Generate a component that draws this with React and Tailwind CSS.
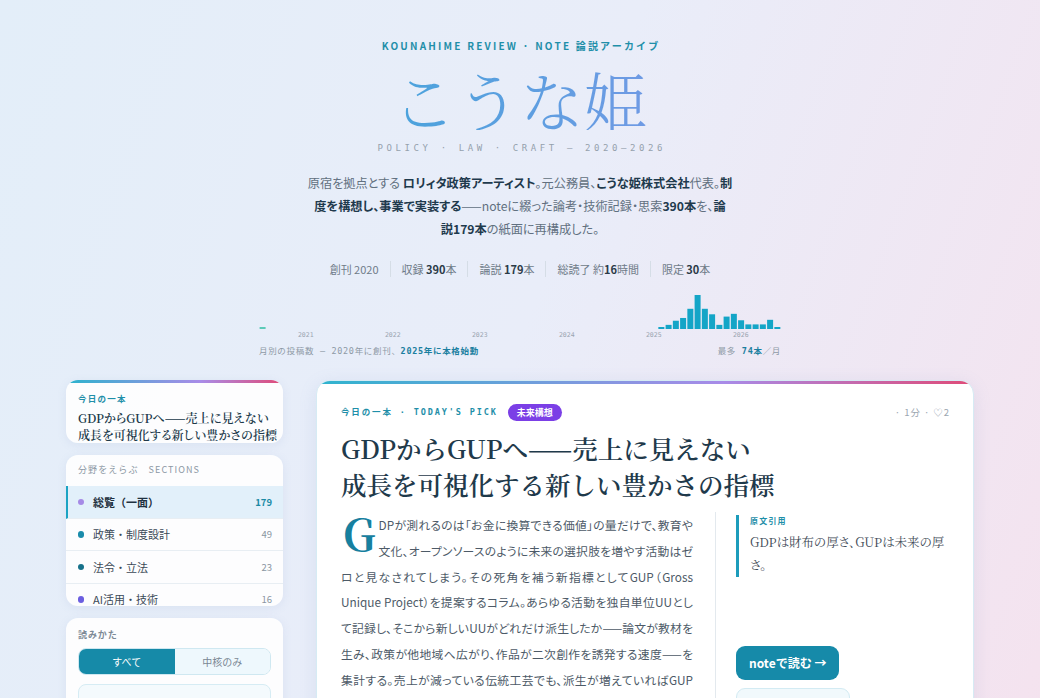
import React from 'react'

const sans = "font-['Noto_Sans_CJK_JP','Noto_Sans',sans-serif]"
const serif = "font-['Noto_Serif_CJK_JP','Liberation_Serif','Noto_Sans_CJK_JP',serif]"
const mono = "font-['DejaVu_Sans_Mono','Noto_Sans_CJK_JP',monospace]"

/* ── monthly post counts, Jun 2020 → May 2026 ── */
const counts = Array(72).fill(0)
counts[0] = 1
;[4, 9, 18, 24, 44, 74, 44, 32, 9, 27, 33, 19, 10, 10, 10, 20, 4].forEach((v, i) => {
  counts[55 + i] = v
})
const years = [
  ['2021', 7],
  ['2022', 19],
  ['2023', 31],
  ['2024', 43],
  ['2025', 55],
  ['2026', 67],
]
const SLOT = 522 / 72

function PostChart() {
  return (
    <div className="mt-[13px] w-[522px]">
      <svg width="522" height="50" className="block">
        {counts.map((v, i) => {
          if (!v) return null
          const h = Math.max((v / 74) * 34, 2)
          return (
            <rect
              key={i}
              x={i * SLOT + 0.6}
              y={39 - h}
              width={6}
              height={h}
              fill={i === 0 ? '#5ccab8' : '#14a5c7'}
            />
          )
        })}
        {years.map(([y, idx]) => (
          <text
            key={y}
            x={idx * SLOT - 4}
            y={46.5}
            textAnchor="middle"
            fontSize="6.5"
            fill="#9aa5b1"
            fontFamily="DejaVu Sans Mono, monospace"
          >
            {y}
          </text>
        ))}
      </svg>
      <div className={`mt-[6px] flex justify-between text-[8.5px] leading-[11px] tracking-[0.08em] text-[#8e9aa6] ${mono}`}>
        <span>
          月別の投稿数 — 2020年に創刊、<b className="text-[#1b7fa0]">2025年に本格始動</b>
        </span>
        <span>
          最多 <b className="text-[#1b7fa0]">74本</b>／月
        </span>
      </div>
    </div>
  )
}

function Stat({ children, first }) {
  return <span className={`px-[11px] ${first ? '' : 'border-l border-[#d5dde6]'}`}>{children}</span>
}

const B = ({ children }) => <b className="font-bold text-[#2b3a47]">{children}</b>
const D = ({ children }) => <b className="font-bold text-[#1f3a4d]">{children}</b>

const sections = [
  { name: '総覧（一面）', count: 179, dot: 'bg-[#a58ae6]', active: true },
  { name: '政策・制度設計', count: 49, dot: 'bg-[#1a8cab]' },
  { name: '法令・立法', count: 23, dot: 'bg-[#16718a]' },
  { name: 'AI活用・技術', count: 16, dot: 'bg-[#6b5ee0]' },
]

function Sidebar() {
  return (
    <aside className="flex w-[217px] flex-col gap-3">
      {/* today's pick, compact */}
      <div className="h-[63px] overflow-hidden rounded-[12px] bg-white/90 shadow-[0_2px_10px_rgba(120,150,190,0.12)]">
        <div className="h-[3px] bg-[linear-gradient(90deg,#2bb3cd,#a98ce8_62%,#e04a77)]" />
        <div className="pl-3 pr-[6px] pt-[9px]">
          <p className="text-[8.5px] font-bold leading-[12px] tracking-[0.15em] text-[#1f8fa9]">今日の一本</p>
          <p
            className={`mt-[5px] text-[12px] font-semibold leading-[17px] text-[#20394a] [font-feature-settings:'palt'] ${serif}`}
          >
            GDPからGUPへ——売上に見えない成長を可視化する新しい豊かさの指標
          </p>
        </div>
      </div>

      {/* sections */}
      <div className="h-[151px] overflow-hidden rounded-[12px] bg-white/90 shadow-[0_2px_10px_rgba(120,150,190,0.12)]">
        <p className="px-3 pb-[10px] pt-[9px] text-[9px] leading-[12px] tracking-[0.12em] text-[#8c98a4]">
          分野をえらぶ　SECTIONS
        </p>
        {sections.map((s) => (
          <div
            key={s.name}
            className={`flex h-[32.5px] items-center border-b border-[#e8eef3] pr-[11px] ${
              s.active ? 'border-l-2 border-l-[#1ba3c3] bg-[#e2f0fa] pl-[9.5px]' : 'pl-[11.5px]'
            }`}
          >
            <span className={`h-[6.5px] w-[6.5px] rounded-full ${s.dot}`} />
            <span
              className={`ml-[9px] flex-1 text-[11px] ${
                s.active ? 'font-bold text-[#1f3140]' : 'text-[#3b4957]'
              }`}
            >
              {s.name}
            </span>
            <span className={`text-[9.5px] ${s.active ? 'font-bold text-[#1a8aa5]' : 'text-[#8a96a2]'}`}>
              {s.count}
            </span>
          </div>
        ))}
      </div>

      {/* reading mode */}
      <div className="rounded-[12px] bg-white/90 px-3 pb-4 pt-[11px] shadow-[0_2px_10px_rgba(120,150,190,0.12)]">
        <p className="text-[9px] font-bold leading-[12px] tracking-[0.1em] text-[#7d8a96]">読みかた</p>
        <div className="mt-[7px] flex h-[27px] overflow-hidden rounded-[8px] border border-[#cfe8f1] text-[10px]">
          <span className="flex flex-1 items-center justify-center bg-[#168aa8] text-white">すべて</span>
          <span className="flex flex-1 items-center justify-center bg-[#eef8fd] text-[#7a8794]">中核のみ</span>
        </div>
        <div className="mt-[9px] h-[30px] rounded-[8px] border border-[#d6ecf4] bg-[#f4fafd]" />
      </div>
    </aside>
  )
}

function FeatureCard() {
  return (
    <article className="w-[658px] overflow-hidden rounded-[14px] border border-[#d6ebf4] bg-white shadow-[0_4px_18px_rgba(110,140,190,0.14)]">
      <div className="h-[3px] bg-[linear-gradient(90deg,#2fb4ce,#a88be8_62%,#df4b78)]" />
      <div className="pb-10 pl-[24px] pr-[20px] pt-[20px]">
        <div className="flex h-[17px] items-center">
          <span className={`text-[8.5px] font-bold tracking-[0.22em] text-[#1f8fa9] ${mono}`}>
            今日の一本 · TODAY'S PICK
          </span>
          <span className="ml-[10px] flex h-[17px] items-center rounded-full bg-[#7b3fe6] px-[9px] text-[9px] font-bold text-white">
            未来構想
          </span>
          <span className="ml-auto mr-[3px] text-[9.5px] tracking-[0.1em] text-[#9aa5b0]">· 1分 · ♡2</span>
        </div>

        <h2 className={`mt-[9px] text-[25.5px] font-semibold leading-[36px] text-[#1f3a4b] ${serif}`}>
          GDPからGUPへ——売上に見えない
          <br />
          成長を可視化する新しい豊かさの指標
        </h2>

        <div className="mt-[10px] flex items-start">
          <p className="w-[352px] text-justify text-[11.8px] leading-[25.8px] text-[#4d5a67] [font-feature-settings:'palt']">
            <span
              className={`float-left ml-[2px] mr-[3px] mt-[2px] text-[43px] font-bold leading-[38px] text-[#17809f] ${serif}`}
            >
              G
            </span>
            DPが測れるのは「お金に換算できる価値」の量だけで、教育や文化、オープンソースのように未来の選択肢を増やす活動はゼロと見なされてしまう。その死角を補う新指標としてGUP（Gross
            Unique Project）を提案するコラム。あらゆる活動を独自単位UUとして記録し、そこから新しいUUがどれだけ派生したか——論文が教材を生み、政策が他地域へ広がり、作品が二次創作を誘発する速度——を集計する。売上が減っている伝統工芸でも、派生が増えていればGUPは成長している。財布の厚さを測るGDPと未来の厚さを測るGUPを併用することで、社会の豊かさを二つの軸で捉え直す。
          </p>

          <div className="ml-[22px] flex-1 self-stretch border-l border-[#e3e9ee] pl-[20px] pt-[3px]">
            <div className="border-l-[3px] border-[#1c9cbb] pl-[11px]">
              <p className="text-[8px] font-bold leading-[12px] tracking-[0.15em] text-[#1f8fa9]">原文引用</p>
              <p
                className={`mt-[4px] text-[12.5px] leading-[23px] text-[#3f4b57] [font-feature-settings:'palt'] ${serif}`}
              >
                GDPは財布の厚さ、GUPは未来の厚
                <br />
                さ。
              </p>
            </div>
            <button className="mt-[69px] flex h-[34px] items-center rounded-[9px] bg-[#168aa9] px-[13px] text-[12px] font-bold text-white">
              noteで読む →
            </button>
            <button className="mt-[8px] flex h-[30px] items-center rounded-[9px] border border-[#d3ebf3] bg-[#f1f9fc] px-[12px] text-[11px] text-[#5e7080]">
              ↻ 別の一本を引く
            </button>
          </div>
        </div>
      </div>
    </article>
  )
}

export default function App() {
  return (
    <div
      className={`min-h-screen bg-[linear-gradient(110deg,#e3eef9_0%,#e9edf9_48%,#f5e2ee_100%)] pb-10 text-[#2a3a48] ${sans}`}
    >
      <header className="flex flex-col items-center pt-[39px]">
        <p className="pl-[0.22em] text-[10px] font-bold leading-[14px] tracking-[0.22em] text-[#1f8fa9]">
          KOUNAHIME REVIEW · NOTE 論説アーカイブ
        </p>
        <h1
          className={`mt-[14px] bg-[linear-gradient(90deg,#4aa3dc,#6f9ae4)] bg-clip-text text-[64px] font-light leading-[63px] text-transparent ${serif}`}
        >
          こうな姫
        </h1>
        <p className={`mt-[12px] pl-[0.4em] text-[9px] leading-[12px] tracking-[0.4em] text-[#95a1ad] ${mono}`}>
          POLICY · LAW · CRAFT — 2020–2026
        </p>
        <p className="mt-[18px] text-center text-[12.2px] leading-[23px] text-[#617080] [font-feature-settings:'palt']">
          原宿を拠点とする <D>ロリィタ政策アーティスト</D>。元公務員、<D>こうな姫株式会社</D>代表。<D>制</D>
          <br />
          <D>度を構想し、事業で実装する</D>——noteに綴った論考・技術記録・思索<D>390本</D>を、<D>論</D>
          <br />
          <D>説179本</D>の紙面に再構成した。
        </p>
        <div className="mt-[20px] flex text-[11px] leading-[16px] text-[#6f7b88]">
          <Stat first>創刊 2020</Stat>
          <Stat>
            収録 <B>390</B>本
          </Stat>
          <Stat>
            論説 <B>179</B>本
          </Stat>
          <Stat>
            総読了 約<B>16</B>時間
          </Stat>
          <Stat>
            限定 <B>30</B>本
          </Stat>
        </div>
        <PostChart />
      </header>

      <main className="mx-auto mt-[23px] flex w-[908px] items-start gap-[33px]">
        <Sidebar />
        <FeatureCard />
      </main>
    </div>
  )
}
